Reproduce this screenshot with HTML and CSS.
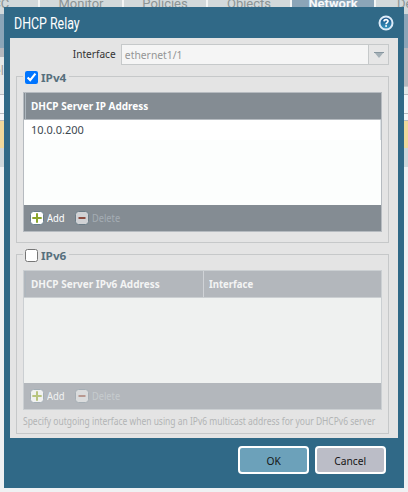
FILE: index.html
```
<!DOCTYPE html>
<html lang="en">
<head>
<meta charset="utf-8">
<title>DHCP Relay</title>
<link rel="stylesheet" href="styles.css">
</head>
<body>
<div class="app">
  <nav class="tabs">
    <span class="tab first">ACC</span><span class="tab">Monitor</span><span class="tab">Policies</span><span class="tab">Objects</span><span class="tab active">Network</span><span class="tab last">Device</span>
  </nav>
  <div class="backdrop">
    <div class="strip left"><i class="blue"></i><i class="gray"></i><i class="pale"><b>el</b></i><i class="white"></i><i class="white low"></i><i class="yellow"></i><i class="mist"></i></div>
    <div class="strip right"><i class="blue"></i><i class="gray"></i><i class="pale"></i><i class="white"></i><i class="white low"></i><i class="yellow"></i><i class="mist"></i></div>
  </div>
</div>
<section class="dialog">
  <header class="title"><h1>DHCP Relay</h1>
    <svg class="help" width="16" height="16" viewBox="0 0 16 16"><defs><linearGradient id="h" x1="0" x2="0" y1="0" y2="1"><stop offset="0" stop-color="#174b82"/><stop offset="1" stop-color="#3a9cc4"/></linearGradient></defs><circle cx="8" cy="8" r="6.5" fill="url(#h)" stroke="#dcebf8" stroke-width="2"/><path d="M6 6.4C6.1 4.1 10.1 4.1 10 6.3C9.9 7.7 8.1 7.5 8.1 9.2" fill="none" stroke="#fff" stroke-width="1.7"/><rect x="7.2" y="10.2" width="1.8" height="1.6" fill="#fff"/></svg>
  </header>
  <main class="content">
    <div class="field"><label><span class="caption">Interface</span></label><div class="select"><span class="value">ethernet1/1</span><div class="trigger"><svg width="10" height="6" viewBox="0 0 10 6"><path d="M0 0H10L5 6Z" fill="#a4b0b7"/><path d="M0 .5H10" stroke="#87969f"/></svg></div></div></div>
    <div class="group v4">
      <label class="legend"><input type="checkbox" checked><span>IPv4</span></label>
      <div class="grid">
        <div class="head"><span class="wide"><span class="fit">DHCP Server IP Address</span></span></div>
        <div class="rows"><div class="row">10.0.0.200</div></div>
        <div class="bar">
          <svg width="14" height="14" viewBox="0 0 14 14"><rect x=".5" y=".5" width="13" height="13" rx="3" fill="#fff" stroke="#687f8b"/><path d="M2.3 7H11.7M7 2.3V11.7" stroke="#8ba62d" stroke-width="2"/></svg><span class="add">Add</span>
          <svg width="14" height="14" viewBox="0 0 14 14"><rect x=".5" y=".5" width="13" height="13" rx="3" fill="#d0d2d5" stroke="#6b7c87"/><path d="M3.5 7H10.5" stroke="#8b4c40" stroke-width="2"/></svg><span class="delete">Delete</span>
        </div>
      </div>
    </div>
    <div class="group v6">
      <label class="legend"><input type="checkbox"><span>IPv6</span></label>
      <div class="grid disabled">
        <div class="head"><span class="name"><span class="fit">DHCP Server IPv6 Address</span></span><span class="iface"><span class="fit tight">Interface</span></span></div>
        <div class="rows"></div>
        <div class="bar">
          <svg width="14" height="14" viewBox="0 0 14 14"><rect x=".5" y=".5" width="13" height="13" rx="3" fill="#f0f1f1" stroke="#a4afb6"/><path d="M2.3 7H11.7M7 2.3V11.7" stroke="#b8c580" stroke-width="2"/></svg><span class="add">Add</span>
          <svg width="14" height="14" viewBox="0 0 14 14"><rect x=".5" y=".5" width="13" height="13" rx="3" fill="#dadcdd" stroke="#a5aeb5"/><path d="M3.5 7H10.5" stroke="#b89991" stroke-width="2"/></svg><span class="delete">Delete</span>
        </div>
      </div>
      <p class="hint">Specify outgoing interface when using an IPv6 multicast address for your DHCPv6 server</p>
    </div>
  </main>
  <footer class="actions"><button class="ok"><span>OK</span></button><button><span>Cancel</span></button></footer>
</section>
</body>
</html>
```
FILE: styles.css
```
* { box-sizing: border-box; }
body { margin: 0; width: 408px; height: 492px; overflow: hidden; background: #eff1f3; font: 11px/14px "Noto Sans", sans-serif; color: #333; }
.app { height: 492px; overflow: hidden; }
.tabs { display: grid; grid-template-columns: 38px repeat(4, 82px) 32px; gap: 2px; height: 14px; overflow: hidden; background: #f3f5f5; }
.tab { height: 14px; line-height: 8px; text-align: center; white-space: nowrap; overflow: hidden; background: #d2d9db; color: #8c9495; font-family: Roboto, sans-serif; font-size: 13px; }
.tab.active { background: #8ba5b8; color: #f6f8fa; font-weight: 700; }
.tab.first { text-align: left; text-indent: -16px; }
.tab.last { text-align: left; padding-left: 21px; }
.backdrop { display: flex; justify-content: space-between; }
.strip { width: 4px; }
.strip i { display: block; font-style: normal; overflow: hidden; }
.blue { height: 34px; background: #8ba5b8; }
.gray { height: 9px; background: #b5b7bd; }
.right .gray { height: 38px; }
.pale { height: 38px; background: #e6e8e8; border-bottom: 1px solid #b9bbc0; }
.right .pale { height: 9px; border-top: 1px solid #c7c9cc; }
.pale b { display: block; margin: 7px 0 0 -6px; font-weight: 400; color: #999; font-size: 12px; }
.white { height: 19px; background: #f5f6f8; border-bottom: 1px solid #b9bbc0; }
.white.low { height: 7px; }
.yellow { height: 27px; background: #f1d99c; }
.mist { height: 19px; background: #d0d8dc; }
.dialog { position: absolute; left: 4px; top: 7px; width: 400px; height: 481px; padding: 0 6px; background: #306987; }
.title { height: 31px; display: flex; align-items: center; justify-content: space-between; padding: 0 4px; }
h1 { margin: 2px 0 0; color: #fff; font: 16px/20px Roboto, sans-serif; transform: scaleX(.775); transform-origin: left; }
.help { display: block; }
.content { height: 400px; background: #e4e4e4; padding: 6px 9px 0 6px; }
.field { display: flex; height: 21px; }
.field label { width: 105px; padding: 3px 5px 0 0; text-align: right; }
.caption { display: inline-block; transform: scaleX(.92); transform-origin: right; }
.select { flex: 1; display: flex; justify-content: space-between; border: 1px solid #c6c9ca; background: #f5f5f5; color: #949596; }
.value { padding: 3px 3px; transform: scaleX(.94); transform-origin: left; }
.trigger { width: 20px; border-left: 1px solid #c6c9ca; background: #e6e6e6; display: flex; justify-content: center; align-items: center; }
.group { border: 1px solid #c6c8c9; padding: 0 6px; }
.v4 { height: 167px; margin-top: 11px; }
.v6 { height: 180px; margin-top: 11px; }
.legend { display: flex; align-items: center; width: 46px; height: 13px; margin-top: -6px; padding-left: 2px; background: #e4e4e4; color: #57707d; font-weight: 700; }
.legend span { transform: scaleX(1.07); transform-origin: left; }
.legend input { width: 13px; height: 13px; margin: 0 3px 0 0; flex: none; }
.grid { height: 140px; margin-top: 8px; border: 1px solid #b6bbc0; background: #fcfefd; }
.head { display: flex; height: 27px; border-bottom: 1px solid #b6bbc0; background: #848c93; color: #fff; font-weight: 700; line-height: 26px; padding-left: 1px; white-space: nowrap; }
.fit { display: inline-block; transform: scaleX(.908); transform-origin: left; }
.tight { transform: scaleX(.87); }
.wide, .name { border-left: 1px solid #adb6bd; padding-left: 5px; }
.name { width: 179px; border-right: 1px solid #d0d3d7; }
.iface { padding-left: 5px; }
.rows { height: 85px; }
.row { height: 20px; padding: 3px 7px; line-height: 13px; background: #fff; border-right: 1px solid #dbe1e5; color: #3d4850; }
.bar { height: 26px; display: flex; align-items: center; padding-left: 6px; background: #848c93; color: #fff; }
.bar svg { flex: none; }
.add { width: 28px; margin: 0 0 0 3px; transform: scaleX(.86); transform-origin: left; }
.delete { margin-left: 3px; color: #a5adb3; transform: scaleX(.84); transform-origin: left; }
.disabled { border-color: #cbcfd2; background: #eff1f0; }
.disabled .head { background: #b3b7bc; border-color: #cbcfd2; color: #f3f4f4; }
.disabled .bar { background: #b3b7bc; color: #f1f2f2; }
.disabled .delete { color: #c6cbce; }
.hint { margin: 4px 0 0; width: max-content; white-space: nowrap; font-size: 10px; color: #b2b4b5; transform: scaleX(.848); transform-origin: left; }
.actions { display: flex; justify-content: flex-end; padding: 8px 12px 0 0; gap: 6px; }
button { width: 71px; height: 28px; padding: 0; border: 2px solid #fff; border-radius: 4px; background: #bbbdc7; color: #151515; font: 11px "Noto Sans", sans-serif; }
button span { display: inline-block; transform: scaleX(.93); }
.ok { background: #6ca1ba; }
```
